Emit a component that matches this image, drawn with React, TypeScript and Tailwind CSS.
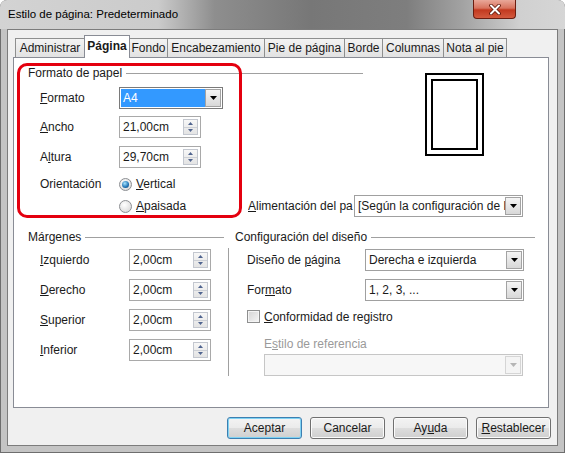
import React from 'react';

const Down = ({ color = '#000' }: { color?: string }) => (
  <svg width="7" height="4" viewBox="0 0 7 4">
    <path d="M0 0h7L3.5 4z" fill={color} />
  </svg>
);

const SpinArrow = ({ up }: { up?: boolean }) => (
  <svg width="5" height="3" viewBox="0 0 5 3">
    <path d={up ? 'M0 3h5L2.5 0z' : 'M0 0h5L2.5 3z'} fill="#50648f" />
  </svg>
);

const ArrowBtn = ({ disabled }: { disabled?: boolean }) => (
  <div
    className={
      disabled
        ? 'flex h-[18px] w-[16px] items-center justify-center border border-[#d5d5d5] bg-[#f4f4f4]'
        : 'flex h-[18px] w-[16px] items-center justify-center border border-[#a3a3a3] bg-gradient-to-b from-[#f5f5f5] to-[#d8d8d8]'
    }
  >
    <Down color={disabled ? '#b5b5b5' : '#000'} />
  </div>
);

const SpinBox = ({ value }: { value: string }) => (
  <div className="flex h-[22px] w-[82px] items-center border border-[#a9a9a9] bg-white pl-[3px] pr-[2px]">
    <span className="flex-1">{value}</span>
    <div className="flex h-[16px] w-[15px] flex-col border border-[#c3c7cf] bg-gradient-to-b from-[#f7f7f7] to-[#e4e4e4]">
      <div className="flex flex-1 items-center justify-center border-b border-[#cdd0d6]">
        <SpinArrow up />
      </div>
      <div className="flex flex-1 items-center justify-center">
        <SpinArrow />
      </div>
    </div>
  </div>
);

const Select = ({ text, w }: { text: string; w: string }) => (
  <div className={`flex h-[22px] ${w} items-center border border-[#a0a0a0] bg-white pl-[3px] pr-[1px]`}>
    <span className="min-w-0 flex-1 overflow-hidden whitespace-nowrap">{text}</span>
    <ArrowBtn />
  </div>
);

const U = ({ children }: { children: React.ReactNode }) => (
  <span className="underline underline-offset-1">{children}</span>
);

const Header = ({ children }: { children: React.ReactNode }) => (
  <div className="flex h-[16px] items-center">
    <span className="whitespace-nowrap">{children}</span>
    <div className="ml-[4px] h-px flex-1 bg-[#a0a0a0]" />
  </div>
);

const Radio = ({ checked }: { checked?: boolean }) => (
  <span className="flex h-[13px] w-[13px] items-center justify-center rounded-full border border-[#8c8e92] bg-[radial-gradient(circle_at_40%_35%,#ffffff,#d2d2d2)]">
    {checked && (
      <span className="h-[7px] w-[7px] rounded-full bg-[radial-gradient(circle_at_40%_35%,#a6e4ff,#1f72b3_60%,#0c3b68)]" />
    )}
  </span>
);

const tabs: [string, number, boolean?][] = [
  ['Administrar', 70],
  ['Página', 46, true],
  ['Fondo', 39],
  ['Encabezamiento', 98],
  ['Pie de página', 81],
  ['Borde', 39],
  ['Columnas', 62],
  ['Nota al pie', 64],
];

const margins: [React.ReactNode, string][] = [
  [<><U>I</U>zquierdo</>, '2,00cm'],
  [<><U>D</U>erecho</>, '2,00cm'],
  [<><U>S</U>uperior</>, '2,00cm'],
  [<><U>I</U>nferior</>, '2,00cm'],
];

const btn =
  'flex h-[22px] w-[75px] items-center justify-center rounded-[3px] border bg-[linear-gradient(#f3f3f3_0%,#ebebeb_48%,#dddddd_52%,#cfcfcf_100%)]';

export default function App() {
  return (
    <div className="relative flex h-[453px] w-[565px] flex-col overflow-hidden rounded-t-[7px] bg-[#c4c4c4] font-['Liberation_Sans',Arial,sans-serif] text-[12px] text-[#1a1a1a] shadow-[inset_0_0_0_1px_#6e6e6e]">
      {/* title bar */}
      <div className="flex h-[29px] items-center bg-[linear-gradient(90deg,#d3d3d3_0%,#cbcbcb_28%,#8e8e8e_38%,#777777_55%,#7e7e7e_72%,#a3a3a3_82%,#d0d0d0_92%,#d6d6d6_100%)] pl-[8px] text-[11.5px] text-black">
        Estilo de página: Predeterminado
      </div>
      <div className="absolute left-[473px] top-0 flex h-[19px] w-[43px] items-center justify-center rounded-b-[4px] border border-t-0 border-[#6b1d10] bg-[linear-gradient(#e9a899_0%,#d8735e_45%,#c2391f_55%,#d35a3e_100%)]">
        <svg width="12" height="11" viewBox="0 0 12 11">
          <path d="M2 1.5l8 8M10 1.5l-8 8" stroke="#5a1408" strokeWidth="3.6" strokeLinecap="round" />
          <path d="M2 1.5l8 8M10 1.5l-8 8" stroke="#fff" strokeWidth="2" strokeLinecap="round" />
        </svg>
      </div>

      {/* client area */}
      <div className="ml-[7px] flex h-[417px] w-[551px] flex-col border border-[#7c7c7c] bg-[#f0f0f0]">
        <div className="ml-[7px] mt-[5px] flex h-[22px] items-end">
          {tabs.map(([label, w, sel], i) => (
            <div
              key={label}
              style={{ width: w }}
              className={
                (i > 0 ? '-ml-px ' : '') +
                (sel
                  ? 'relative z-10 -mb-px h-[23px] border border-b-0 border-[#898c95] bg-white pt-[1px] text-center font-bold leading-[19px]'
                  : 'h-[19px] border border-b-0 border-[#8e8f8f] bg-gradient-to-b from-[#f3f3f3] to-[#e2e2e2] text-center leading-[18px]')
              }
            >
              {label}
            </div>
          ))}
        </div>

        {/* panel */}
        <div className="relative ml-[5px] flex h-[351px] w-[536px] flex-col border border-[#898c95] bg-white">
          <div className="flex">
            <div className="ml-[14px] flex w-[335px] flex-col">
              <div className="mt-[7px]">
                <Header>Formato de papel</Header>
              </div>
              <div className="mt-[6px] flex h-[22px] items-center">
                <span className="w-[91px] pl-[12px]">
                  <U>F</U>ormato
                </span>
                <div className="flex h-[22px] w-[104px] items-center border border-[#7a7a7a] bg-white p-[1px]">
                  <div className="flex h-full flex-1 items-center bg-[#3399ff] pl-[2px] text-white">A4</div>
                  <ArrowBtn />
                </div>
              </div>
              <div className="mt-[7px] flex h-[22px] items-center">
                <span className="w-[91px] pl-[12px]">
                  <U>A</U>ncho
                </span>
                <SpinBox value="21,00cm" />
              </div>
              <div className="mt-[8px] flex h-[22px] items-center">
                <span className="w-[91px] pl-[12px]">
                  A<U>l</U>tura
                </span>
                <SpinBox value="29,70cm" />
              </div>
              <div className="mt-[8px] flex h-[16px] items-center">
                <span className="w-[91px] pl-[12px]">Orientación</span>
                <Radio checked />
                <span className="ml-[4px]">
                  <U>V</U>ertical
                </span>
              </div>
            </div>
            <div className="ml-[62px] mt-[15px] h-[83px] w-[59px] border-2 border-black p-[4px]">
              <div className="h-full w-full border-2 border-black" />
            </div>
          </div>

          <div className="mt-[3px] flex h-[22px] items-center">
            <div className="ml-[105px] flex w-[129px] items-center">
              <Radio />
              <span className="ml-[4px]">
                <U>A</U>paisada
              </span>
            </div>
            <span className="w-[106px] overflow-hidden whitespace-nowrap">
              <U>A</U>limentación del pa
            </span>
            <Select text="[Según la configuración de l" w="w-[169px]" />
          </div>

          <div className="mt-[12px] flex">
            <div className="ml-[14px] flex w-[196px] flex-col">
              <Header>Márgenes</Header>
              <div className="mt-[4px] flex flex-col gap-[8px]">
                {margins.map(([label, v], i) => (
                  <div key={i} className="flex h-[22px] items-center">
                    <span className="w-[101px] pl-[12px]">{label}</span>
                    <SpinBox value={v} />
                  </div>
                ))}
              </div>
            </div>

            <div className="ml-[4px] flex w-[307px] flex-col">
              <div className="pl-[7px]">
                <Header>Configuración del diseño</Header>
              </div>
              <div className="mt-[3px] flex h-[128px] flex-col border-l border-[#a0a0a0] pl-[18px]">
                <div className="mt-[1px] flex h-[22px] items-center">
                  <span className="w-[118px]">
                    Diseño de <U>p</U>ágina
                  </span>
                  <Select text="Derecha e izquierda" w="w-[159px]" />
                </div>
                <div className="mt-[8px] flex h-[22px] items-center">
                  <span className="w-[118px]">
                    For<U>m</U>ato
                  </span>
                  <Select text="1, 2, 3, ..." w="w-[159px]" />
                </div>
                <div className="mt-[8px] flex h-[15px] items-center">
                  <span className="h-[13px] w-[13px] border border-[#8e8f8f] bg-gradient-to-br from-[#d4d4d4] to-[#f6f6f6] shadow-[inset_0_0_0_1px_#f4f4f4]" />
                  <span className="ml-[4px]">
                    <U>C</U>onformidad de registro
                  </span>
                </div>
                <div className="ml-[17px] mt-[12px] flex h-[16px] items-center text-[#9a9a9a]">
                  E<U>s</U>tilo de referencia
                </div>
                <div className="ml-[17px] mt-[2px] flex h-[22px] w-[259px] items-center justify-end border border-[#c6c6c6] bg-[#f7f7f7] pr-[1px]">
                  <ArrowBtn disabled />
                </div>
              </div>
            </div>
          </div>

          {/* highlight annotation */}
          <div className="pointer-events-none absolute left-[3px] top-[5px] h-[155px] w-[225px] rounded-[10px] border-[3px] border-[#e4000f]" />
        </div>

        <div className="mt-[9px] flex justify-end gap-[8px] pr-[6px]">
          <div className={`${btn} border-[#3c7fb1] shadow-[inset_0_0_0_1px_#7fd2f3]`}>Aceptar</div>
          <div className={`${btn} border-[#707070] shadow-[inset_0_0_0_1px_#fbfbfb]`}>Cancelar</div>
          <div className={`${btn} border-[#707070] shadow-[inset_0_0_0_1px_#fbfbfb]`}>
            Ay<U>u</U>da
          </div>
          <div className={`${btn} border-[#707070] shadow-[inset_0_0_0_1px_#fbfbfb]`}>
            <U>R</U>establecer
          </div>
        </div>
      </div>
    </div>
  );
}
